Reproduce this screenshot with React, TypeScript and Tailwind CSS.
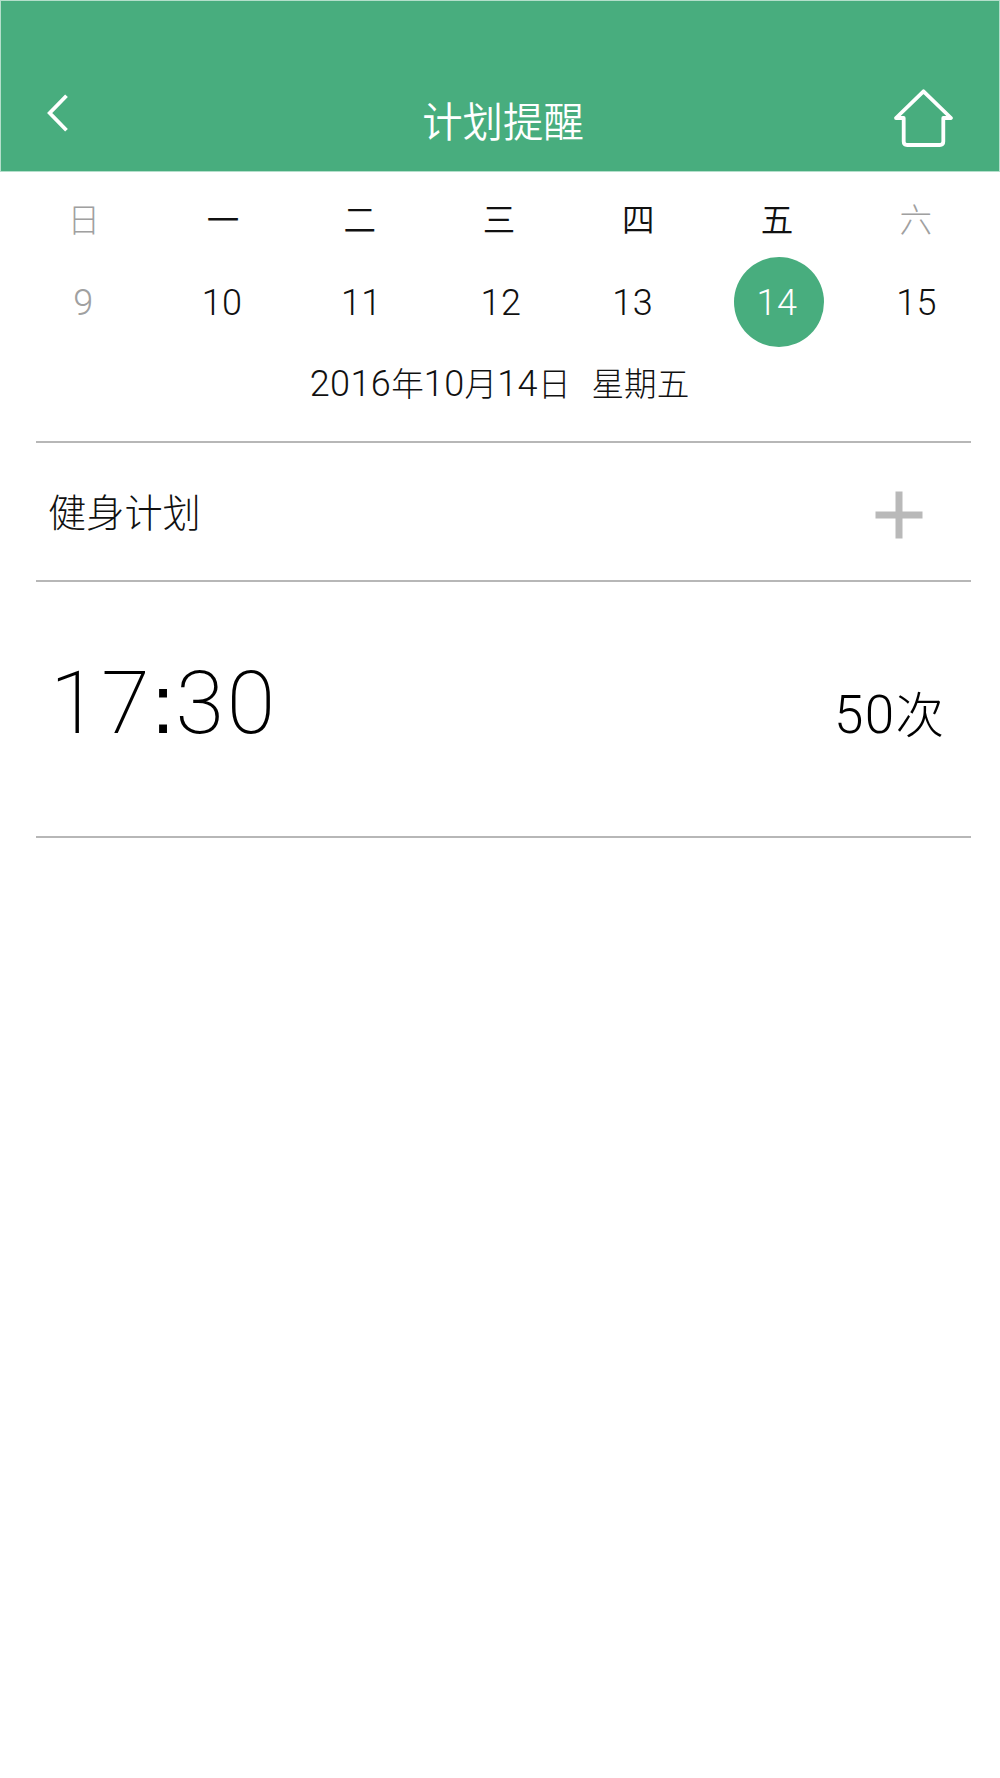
type Day = {
  name: string;
  date: string;
  nudge?: string;
  nameNudge?: string;
  muted?: boolean;
  mutedDate?: boolean;
  selected?: boolean;
};

const week: Day[] = [
  { name: "日", date: "9", muted: true, mutedDate: true, nudge: "mr-[4px]", nameNudge: "pr-[1px]" },
  { name: "一", date: "10", nudge: "mr-[4px]" },
  { name: "二", date: "11", nudge: "mr-[3px] tracking-[1.5px]", nameNudge: "pr-[4px]" },
  { name: "三", date: "12", nudge: "mr-[1px]", nameNudge: "pr-[3px]" },
  { name: "四", date: "13", nudge: "mr-[15px]", nameNudge: "pr-[2px]" },
  { name: "五", date: "14", selected: true, nudge: "mr-[4px]", nameNudge: "pr-[2px]" },
  { name: "六", date: "15", muted: true, nudge: "mr-[2px]", nameNudge: "pr-[2px]" },
];

function Digits({ children }: { children: string }) {
  return (
    <span className="font-[Roboto,sans-serif] text-[36px] font-light tracking-[0.4px]">{children}</span>
  );
}

function Header() {
  return (
    <header className="flex h-[172px] items-start justify-between border border-[#b4dfcb] bg-[#48ad7e] pr-[45px] pl-[45px] text-white">
      <button aria-label="返回" className="mt-[92px] w-[66px]">
        <svg width="24" height="42" viewBox="0 0 24 42" fill="none" stroke="currentColor" strokeWidth="3.8">
          <path d="M20.500 2.700 3.700 20 20.500 37.300" />
        </svg>
      </button>
      <h1 className="mt-[99px] text-[40.4px] leading-none font-[350]">计划提醒</h1>
      <button aria-label="首页" className="mt-[86px]">
        <svg width="60" height="62" viewBox="0 0 60 62" fill="none" stroke="currentColor" strokeWidth="3.8" strokeLinejoin="round">
          <path d="M29.500 4.300 57 31H49.300V54.500Q49.300 58 45.800 58H13.200Q9.700 58 9.700 54.500V31H2Z" />
        </svg>
      </button>
    </header>
  );
}

function Calendar() {
  return (
    <section className="h-[269px] pt-[24px]">
      <div className="ml-[15px] grid w-[971px] grid-cols-7 text-center text-[32.5px] leading-[44px] font-[350]">
        {week.map((day) => (
          <div key={day.date} className={(day.muted ? "font-light text-[#a0a0a0] " : "") + (day.nameNudge ?? "")}>
            {day.name}
          </div>
        ))}
      </div>
      <div className="mt-[17px] ml-[16px] grid w-[971px] grid-cols-7 justify-items-center">
        {week.map((day) => (
          <div
            key={day.date}
            className={
              "flex h-[90px] w-[90px] items-center justify-center rounded-full pt-[2px] leading-none " +
              (day.selected ? "bg-[#48ad7e] text-white" : day.mutedDate ? "text-[#a0a0a0]" : "")
            }
          >
            <span className={day.nudge}>
              <Digits>{day.date}</Digits>
            </span>
          </div>
        ))}
      </div>
      <p className="mt-[10px] pr-px text-center text-[32.6px] leading-[50px] whitespace-pre">
        <Digits>2016</Digits>年<Digits>10</Digits>月<Digits>14</Digits>日<span className="ml-[21px]">星期五</span>
      </p>
    </section>
  );
}

export default function App() {
  return (
    <div className="h-[1778px] w-[1000px] bg-white font-['Noto_Sans_CJK_SC',sans-serif] font-light text-[#111]">
      <Header />
      <Calendar />
      <main className="mr-[29px] ml-[36px] border-y-2 border-[#b7b7b7]">
        <div className="flex h-[137px] items-center justify-between pr-[48px] pl-[12px]">
          <h2 className="text-[38.2px] leading-none font-light">健身计划</h2>
          <button aria-label="添加" className="mt-[7px]">
            <svg width="48" height="48" viewBox="0 0 48 48" className="block" stroke="#b9b9b9" strokeWidth="7">
              <path d="M24 .5V47.500M.5 24H47.500" />
            </svg>
          </button>
        </div>
        <div className="flex h-[256px] items-baseline justify-between border-t-2 border-[#b7b7b7] pt-[77px] pr-[27px] pl-[14px] leading-none text-black">
          <time className="font-[Roboto,sans-serif] text-[88px] font-extralight tracking-[2.8px]">
            17<span className="ml-[-1px] font-['Liberation_Sans',sans-serif] text-[83px] tracking-[1px]">:</span>30
          </time>
          <span className="text-[48.5px]">
            <span className="font-[Roboto,sans-serif] text-[53px] tracking-[1.4px]">50</span>次
          </span>
        </div>
      </main>
    </div>
  );
}
